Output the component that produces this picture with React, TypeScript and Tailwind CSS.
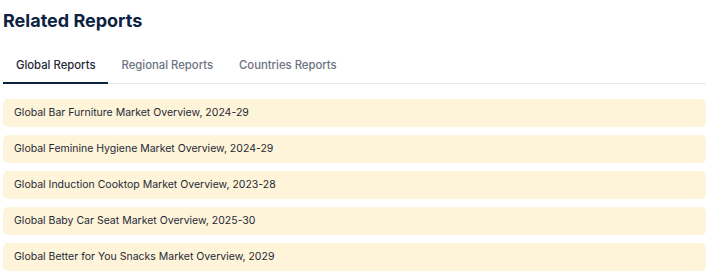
import React, { useState } from 'react';

const tabs = ['Global Reports', 'Regional Reports', 'Countries Reports'];

const reports = [
    'Global Bar Furniture Market Overview, 2024-29',
    'Global Feminine Hygiene Market Overview, 2024-29',
    'Global Induction Cooktop Market Overview, 2023-28',
    'Global Baby Car Seat Market Overview, 2025-30',
    'Global Better for You Snacks Market Overview, 2029',
];

const App: React.FC = () => {
    const [active, setActive] = useState(0);

    return (
        <div className="w-[717px] h-[280px] bg-white pl-[3px] pr-[11px] pt-[9px] font-['Inter',sans-serif]">
            <h2 className="text-[18px] leading-[24px] font-bold text-[#0d2240]">Related Reports</h2>

            {/* tabs */}
            <div className="mt-[18px] flex border-b border-[#e5e7eb]">
                {tabs.map((t, i) => (
                    <button
                        key={t}
                        onClick={() => setActive(i)}
                        className={
                            i === active
                                ? 'px-[13px] pt-[6px] pb-[9px] text-[11.3px] leading-[16px] font-medium text-[#1f2937] border-b-2 border-[#0d2240] -mb-px'
                                : 'px-[13px] pt-[6px] pb-[9px] text-[11.3px] leading-[16px] font-medium text-[#6b7280] border-b-2 border-transparent -mb-px'
                        }
                    >
                        {t}
                    </button>
                ))}
            </div>

            {/* list */}
            <div className="mt-[15px] flex flex-col gap-[8px]">
                {reports.map((r) => (
                    <div key={r} className="h-[28px] flex items-center px-[11px] rounded-[5px] bg-[#fef4d9] text-[10.5px] text-[#1f2937]">
                        {r}
                    </div>
                ))}
            </div>
        </div>
    );
};

export default App;
